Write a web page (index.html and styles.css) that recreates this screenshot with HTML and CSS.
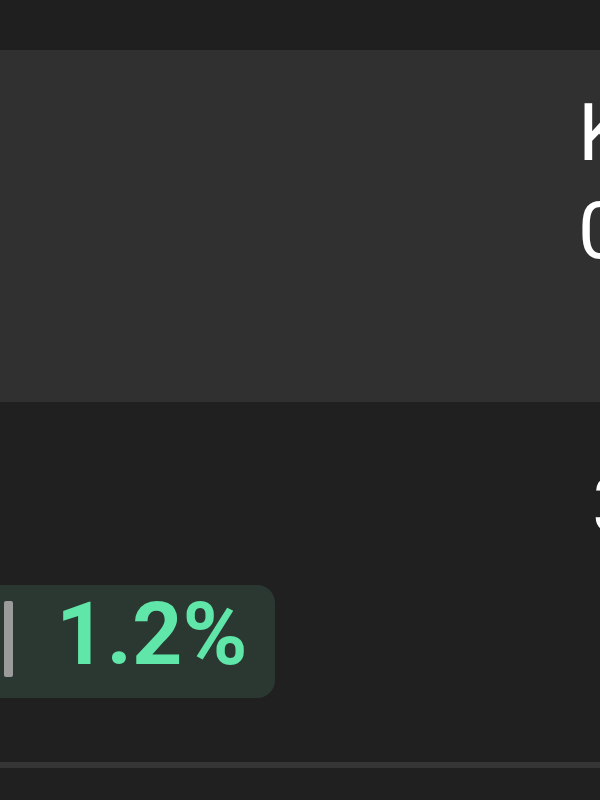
FILE: index.html
```html
<!DOCTYPE html>
<html lang="en">
<head>
    <meta charset="UTF-8">
    <meta name="viewport" content="width=device-width, initial-scale=1.0">
    <title>Kurs</title>
    <link rel="stylesheet" href="styles.css">
</head>
<body>
    <div class="topbar"></div>

    <section class="panel">
        <p class="panel-text">Kurs<br>0,00</p>
    </section>

    <section class="stats">
        <p class="stats-value">3 450</p>
        <div class="badge">
            <span class="badge-bar"></span>
            <span class="badge-value">1.2%</span>
        </div>
    </section>

    <hr class="divider">
</body>
</html>
```

FILE: styles.css
```css
body {
    margin: 0;
    background-color: #202020;
    color: #ffffff;
    font-family: Roboto, "Noto Sans", sans-serif;
    overflow: hidden;
}
.topbar {
    height: 50px;
    background-color: #1f1f1f;
}
.panel {
    height: 352px;
    box-sizing: border-box;
    padding: 34px 0 0 578px;
    background-color: #303030;
    white-space: nowrap;
}
.panel-text {
    margin: 0;
    font-size: 80px;
    line-height: 98px;
}
.stats {
    padding-top: 54px;
    white-space: nowrap;
}
.stats-value {
    margin: 0;
    padding-left: 592px;
    font-size: 80px;
    line-height: 98px;
}
.badge {
    display: inline-flex;
    align-items: flex-start;
    gap: 43px;
    margin: 31px 0 0 -20px;
    padding: 5px 27px 20px 24px;
    background-color: #2b3832;
    border-radius: 18px;
}
.badge-bar {
    width: 9px;
    height: 76px;
    margin-top: 11px;
    background-color: #9b9b9b;
    border-radius: 2px;
}
.badge-value {
    font-size: 88px;
    font-weight: bold;
    line-height: 88px;
    color: #5fe6a8;
}
.divider {
    margin: 64px 0 0;
    height: 6px;
    border: 0;
    background-color: #353535;
}
```
